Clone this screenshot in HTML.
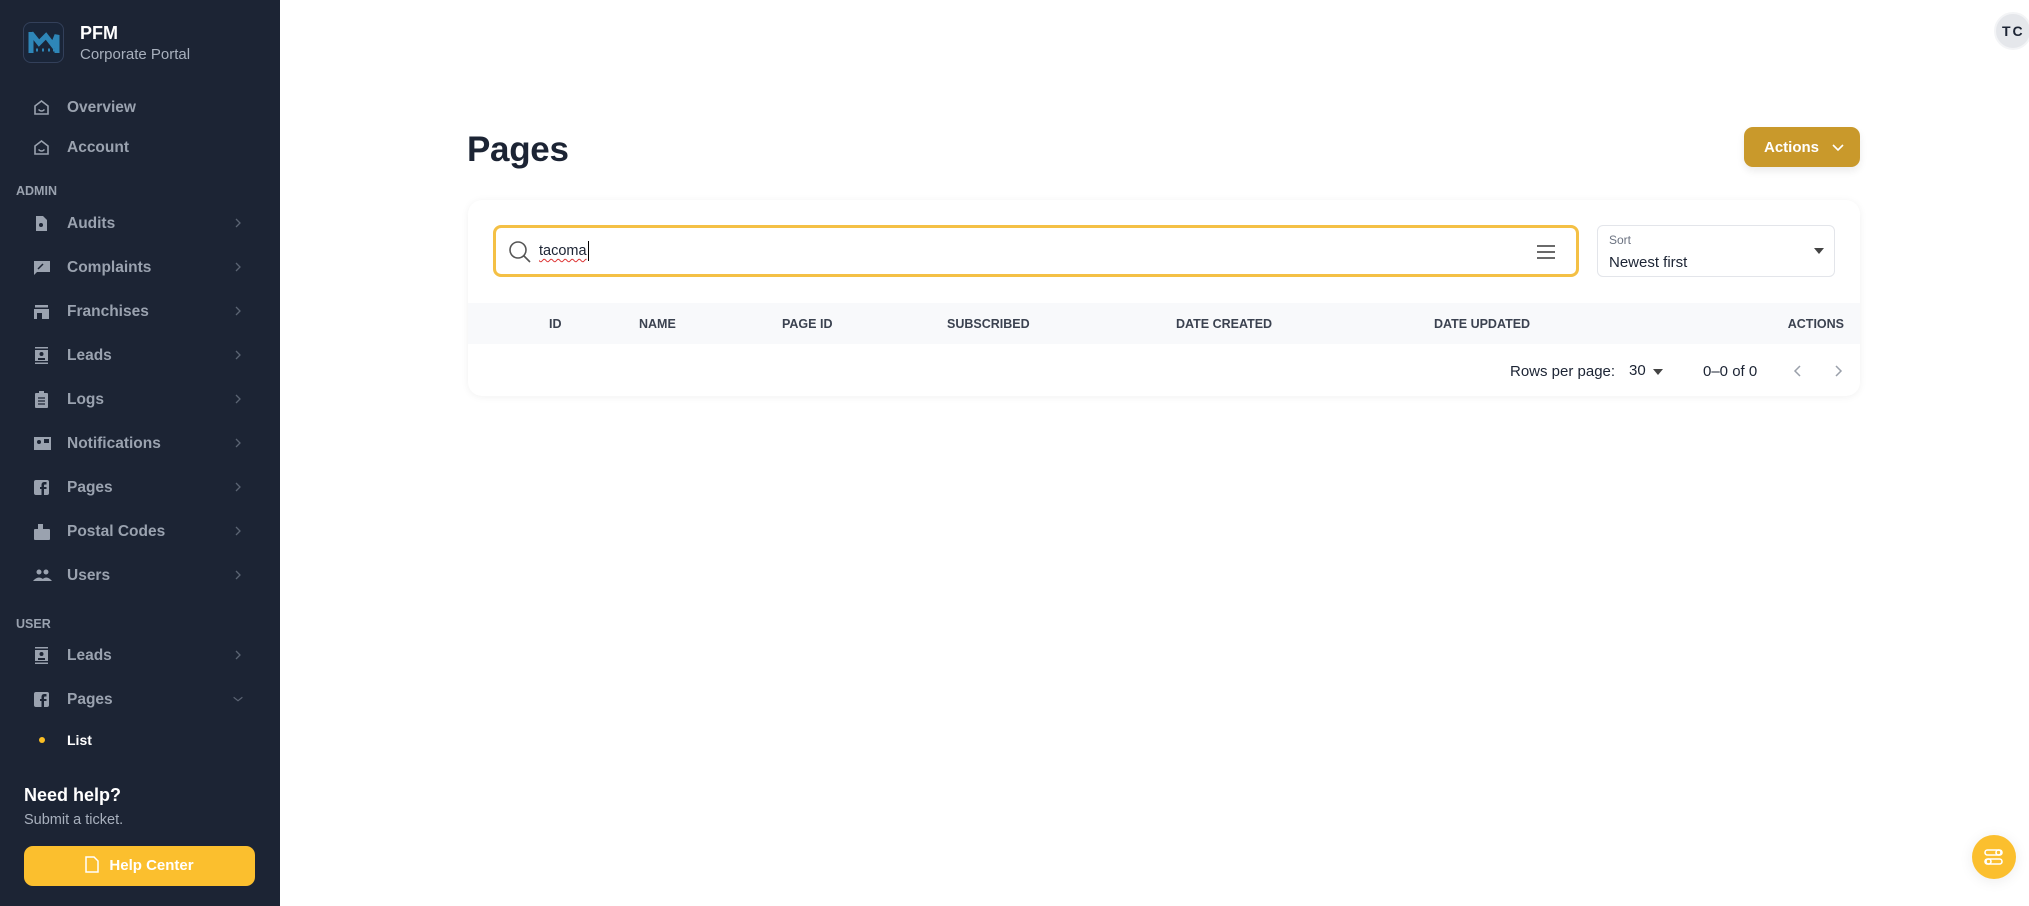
<!DOCTYPE html>
<html><head><meta charset="utf-8">
<style>
*{box-sizing:border-box;margin:0;padding:0}
body{width:2029px;height:906px;overflow:hidden;background:#fff;font-family:"Liberation Sans",Arial,sans-serif;position:relative}
.sb{position:absolute;left:0;top:0;width:280px;height:906px;background:#1c2434}
.logo{position:absolute;left:23px;top:22px;width:41px;height:41px;border-radius:8px;border:1px solid #33405a;background:#1a2538}
.t1{position:absolute;left:80px;top:23px;color:#fff;font-weight:bold;font-size:18px}
.t2{position:absolute;left:80px;top:46px;color:#a8b0bd;font-size:15px}
.it{position:absolute;left:0;width:280px;height:30px;color:#9aa2af;font-weight:bold;font-size:15.5px}
.it .ic{position:absolute;left:33px;top:7px;width:17px;height:17px}
.it .tx{position:absolute;left:67px;top:7px}
.it .ch{position:absolute;left:233px;top:7px;width:10px;height:16px}
.sec{position:absolute;left:16px;color:#9aa2af;font-weight:bold;font-size:12.5px}
h1{position:absolute;left:467px;top:130px;font-size:35px;font-weight:bold;color:#1c2434;letter-spacing:-0.3px}
.act{position:absolute;left:1744px;top:127px;width:116px;height:40px;background:#c9992b;border-radius:9px;color:#fff;font-weight:bold;font-size:15px;box-shadow:0 4px 8px rgba(0,0,0,.08)}
.card{position:absolute;left:468px;top:200px;width:1392px;height:196px;border-radius:14px;background:#fff;box-shadow:0 1px 8px rgba(0,0,0,.06)}
.search{position:absolute;left:25px;top:25px;width:1086px;height:52px;border:3px solid #f4c045;border-radius:8px}
.sort{position:absolute;left:1129px;top:25px;width:238px;height:52px;border:1px solid #e3e5ea;border-radius:6px}
.hdr{position:absolute;left:0;top:103px;width:1392px;height:41px;background:#f8f9fb}
.hdr span{position:absolute;top:14px;font-size:12.5px;font-weight:bold;color:#3b4250}
.ft{position:absolute;top:162px;font-size:15px;color:#1c2434}
</style></head><body>
<div class="sb">
 <div class="logo"><svg width="39" height="39" viewBox="0 0 39 39"><path d="M7 9 L7 30 M7 10 L15 20 L22 13 L29 22 L33 12 L33 30" stroke="#2e86b8" stroke-width="5" fill="none"/><path d="M12 27h2M18 27h2M24 27h2M29 27h2" stroke="#2e86b8" stroke-width="3"/></svg></div>
 <div class="t1">PFM</div><div class="t2">Corporate Portal</div>

 <div class="it" style="top:92px"><svg class="ic" viewBox="0 0 17 17"><path d="M2 7 L8.5 2 L15 7 V15 H2Z" fill="none" stroke="#9aa2af" stroke-width="1.6"/><path d="M5.5 10.5q3 3 6 0" fill="none" stroke="#9aa2af" stroke-width="1.5"/></svg><span class="tx">Overview</span></div>
 <div class="it" style="top:132px"><svg class="ic" viewBox="0 0 17 17"><path d="M2 7 L8.5 2 L15 7 V15 H2Z" fill="none" stroke="#9aa2af" stroke-width="1.6"/><path d="M5.5 10.5q3 3 6 0" fill="none" stroke="#9aa2af" stroke-width="1.5"/></svg><span class="tx">Account</span></div>
 <div class="sec" style="top:184px">ADMIN</div>
 <div class="it" style="top:208px"><svg class="ic" viewBox="0 0 17 17"><path d="M3 1h7l4 4v11H3z" fill="#9aa2af"/><circle cx="8" cy="10" r="2" fill="#1c2434"/></svg><span class="tx">Audits</span><svg class="ch" viewBox="0 0 10 16"><path d="M3 4l4 4-4 4" stroke="#5b6473" stroke-width="1.3" fill="none"/></svg></div>
 <div class="it" style="top:252px"><svg class="ic" viewBox="0 0 17 17"><path d="M1 2h16v11H4l-3 3z" fill="#9aa2af"/><path d="M5 10l5-5" stroke="#1c2434" stroke-width="1.5"/></svg><span class="tx">Complaints</span><svg class="ch" viewBox="0 0 10 16"><path d="M3 4l4 4-4 4" stroke="#5b6473" stroke-width="1.3" fill="none"/></svg></div>
 <div class="it" style="top:296px"><svg class="ic" viewBox="0 0 17 17"><rect x="2" y="2" width="13" height="2.5" fill="#9aa2af"/><rect x="1" y="6" width="15" height="10" fill="#9aa2af"/><rect x="4" y="10" width="5" height="6" fill="#1c2434"/></svg><span class="tx">Franchises</span><svg class="ch" viewBox="0 0 10 16"><path d="M3 4l4 4-4 4" stroke="#5b6473" stroke-width="1.3" fill="none"/></svg></div>
 <div class="it" style="top:340px"><svg class="ic" viewBox="0 0 17 17"><rect x="2" y="0" width="13" height="1.5" fill="#9aa2af"/><rect x="2" y="3" width="13" height="11" fill="#9aa2af"/><rect x="2" y="15.5" width="13" height="1.5" fill="#9aa2af"/><circle cx="8.5" cy="7" r="2" fill="#1c2434"/><path d="M5 12h7" stroke="#1c2434" stroke-width="2"/></svg><span class="tx">Leads</span><svg class="ch" viewBox="0 0 10 16"><path d="M3 4l4 4-4 4" stroke="#5b6473" stroke-width="1.3" fill="none"/></svg></div>
 <div class="it" style="top:384px"><svg class="ic" viewBox="0 0 17 17"><rect x="2" y="2" width="13" height="15" rx="1" fill="#9aa2af"/><rect x="6" y="0" width="5" height="3" fill="#9aa2af"/><path d="M5 7h7M5 10h7M5 13h7" stroke="#1c2434" stroke-width="1.3"/></svg><span class="tx">Logs</span><svg class="ch" viewBox="0 0 10 16"><path d="M3 4l4 4-4 4" stroke="#5b6473" stroke-width="1.3" fill="none"/></svg></div>
 <div class="it" style="top:428px"><svg class="ic" viewBox="0 0 17 17" style="width:19px"><rect x="0" y="2" width="17" height="13" fill="#9aa2af"/><circle cx="5" cy="7" r="2" fill="#1c2434"/><rect x="10" y="4" width="5" height="4" fill="#1c2434"/></svg><span class="tx">Notifications</span><svg class="ch" viewBox="0 0 10 16"><path d="M3 4l4 4-4 4" stroke="#5b6473" stroke-width="1.3" fill="none"/></svg></div>
 <div class="it" style="top:472px"><svg class="ic" viewBox="0 0 17 17"><rect x="1" y="1" width="15" height="15" rx="2" fill="#9aa2af"/><path d="M11 16V10h2.5V8H11V6.5c0-.8.4-1 1-1h1.5V3H11.5C9.5 3 8.5 4 8.5 6v2H7v2h1.5v6z" fill="#1c2434"/></svg><span class="tx">Pages</span><svg class="ch" viewBox="0 0 10 16"><path d="M3 4l4 4-4 4" stroke="#5b6473" stroke-width="1.3" fill="none"/></svg></div>
 <div class="it" style="top:516px"><svg class="ic" viewBox="0 0 17 17"><rect x="1" y="6" width="16" height="11" rx="1" fill="#9aa2af"/><rect x="5" y="1" width="5" height="8" fill="#9aa2af"/></svg><span class="tx">Postal Codes</span><svg class="ch" viewBox="0 0 10 16"><path d="M3 4l4 4-4 4" stroke="#5b6473" stroke-width="1.3" fill="none"/></svg></div>
 <div class="it" style="top:560px"><svg class="ic" viewBox="0 0 19 17" style="width:19px"><circle cx="6" cy="5" r="2.5" fill="#9aa2af"/><circle cx="13" cy="5" r="2.5" fill="#9aa2af"/><path d="M0 14q6-7 12 0zM8 14q5-7 11 0z" fill="#9aa2af"/></svg><span class="tx">Users</span><svg class="ch" viewBox="0 0 10 16"><path d="M3 4l4 4-4 4" stroke="#5b6473" stroke-width="1.3" fill="none"/></svg></div>
 <div class="sec" style="top:617px">USER</div>
 <div class="it" style="top:640px"><svg class="ic" viewBox="0 0 17 17"><rect x="2" y="0" width="13" height="1.5" fill="#9aa2af"/><rect x="2" y="3" width="13" height="11" fill="#9aa2af"/><rect x="2" y="15.5" width="13" height="1.5" fill="#9aa2af"/><circle cx="8.5" cy="7" r="2" fill="#1c2434"/><path d="M5 12h7" stroke="#1c2434" stroke-width="2"/></svg><span class="tx">Leads</span><svg class="ch" viewBox="0 0 10 16"><path d="M3 4l4 4-4 4" stroke="#5b6473" stroke-width="1.3" fill="none"/></svg></div>
 <div class="it" style="top:684px"><svg class="ic" viewBox="0 0 17 17"><rect x="1" y="1" width="15" height="15" rx="2" fill="#9aa2af"/><path d="M11 16V10h2.5V8H11V6.5c0-.8.4-1 1-1h1.5V3H11.5C9.5 3 8.5 4 8.5 6v2H7v2h1.5v6z" fill="#1c2434"/></svg><span class="tx">Pages</span><svg class="ch" viewBox="0 0 16 16" style="width:14px;left:231px"><path d="M3 6l5 4 5-4" stroke="#5b6473" stroke-width="1.3" fill="none"/></svg></div>
 <div style="position:absolute;left:39px;top:737px;width:6px;height:6px;border-radius:50%;background:#fbbf24"></div>
 <div style="position:absolute;left:67px;top:732px;color:#fff;font-weight:bold;font-size:14px">List</div>
 <div style="position:absolute;left:24px;top:785px;color:#fff;font-weight:bold;font-size:18px">Need help?</div>
 <div style="position:absolute;left:24px;top:812px;color:#a8b0bd;font-size:14.5px">Submit a ticket.</div>
 <div style="position:absolute;left:24px;top:846px;width:231px;height:40px;background:#fbbf2e;border-radius:9px;color:#fff;font-weight:bold;font-size:15px;text-align:center;line-height:40px"><svg width="14" height="17" viewBox="0 0 14 17" style="vertical-align:-3px;margin-right:10px"><path d="M1 1h8l4 4v11H1z" fill="none" stroke="#fff" stroke-width="1.5"/></svg>Help Center</div>
</div>

<h1>Pages</h1>
<div class="act"><span style="position:absolute;left:20px;top:12px">Actions</span><svg style="position:absolute;left:88px;top:16px" width="12" height="10" viewBox="0 0 12 10"><path d="M1 2l5 5 5-5" stroke="#fff" stroke-width="1.6" fill="none"/></svg></div>

<div class="card">
 <div class="search">
  <svg style="position:absolute;left:12px;top:12px" width="24" height="24" viewBox="0 0 24 24"><circle cx="10" cy="10" r="8" fill="none" stroke="#555" stroke-width="1.6"/><path d="M16 16l6 6" stroke="#555" stroke-width="1.6"/></svg>
  <span style="position:absolute;left:43px;top:15px;font-size:14.5px;color:#1c2434;text-decoration:underline wavy #d33;text-decoration-thickness:1px;text-underline-offset:3px">tacoma</span>
  <span style="position:absolute;left:92px;top:13px;width:1px;height:20px;background:#000"></span>
  <svg style="position:absolute;left:1040px;top:16px" width="20" height="16" viewBox="0 0 20 16"><path d="M1 2h18M1 8h18M1 14h18" stroke="#555" stroke-width="1.8"/></svg>
 </div>
 <div class="sort">
  <span style="position:absolute;left:11px;top:7px;font-size:12px;color:#6b7280">Sort</span>
  <span style="position:absolute;left:11px;top:28px;font-size:15px;color:#1c2434">Newest first</span>
  <svg style="position:absolute;left:216px;top:22px" width="10" height="6" viewBox="0 0 10 6"><path d="M0 0h10L5 6z" fill="#444"/></svg>
 </div>
 <div class="hdr">
  <span style="left:81px">ID</span><span style="left:171px">NAME</span><span style="left:314px">PAGE ID</span><span style="left:479px">SUBSCRIBED</span><span style="left:708px">DATE CREATED</span><span style="left:966px">DATE UPDATED</span><span style="right:16px">ACTIONS</span>
 </div>
 <span class="ft" style="left:1042px;top:163px">Rows per page:</span>
 <span class="ft" style="left:1161px;top:162px">30</span>
 <svg style="position:absolute;left:1185px;top:169px" width="10" height="6" viewBox="0 0 10 6"><path d="M0 0h10L5 6z" fill="#444"/></svg>
 <span class="ft" style="left:1235px;top:163px">0–0 of 0</span>
 <svg style="position:absolute;left:1325px;top:163px" width="10" height="16" viewBox="0 0 10 16"><path d="M7 3L2 8l5 5" stroke="#9aa0aa" stroke-width="1.5" fill="none"/></svg>
 <svg style="position:absolute;left:1365px;top:163px" width="10" height="16" viewBox="0 0 10 16"><path d="M3 3l5 5-5 5" stroke="#9aa0aa" stroke-width="1.5" fill="none"/></svg>
</div>

<div style="position:absolute;left:1994px;top:12px;width:38px;height:38px;border-radius:50%;background:#e5e7eb;border:2px solid #f3f4f6;font-weight:bold;font-size:14px;color:#1c2434;line-height:34px;padding-left:6px;letter-spacing:2px">TC</div>
<div style="position:absolute;left:1972px;top:835px;width:44px;height:44px;border-radius:50%;background:#fbbf2e;box-shadow:0 2px 14px rgba(0,0,0,.08)">
 <svg style="position:absolute;left:11px;top:11px" width="22" height="22" viewBox="0 0 22 22"><rect x="2" y="4" width="17" height="5" rx="2.5" fill="none" stroke="#fff" stroke-width="1.6"/><rect x="2" y="13" width="17" height="5" rx="2.5" fill="none" stroke="#fff" stroke-width="1.6"/><circle cx="15.5" cy="6.5" r="2.5" fill="none" stroke="#fff" stroke-width="1.6"/><circle cx="5.5" cy="15.5" r="2.5" fill="none" stroke="#fff" stroke-width="1.6"/></svg>
</div>
</body></html>
